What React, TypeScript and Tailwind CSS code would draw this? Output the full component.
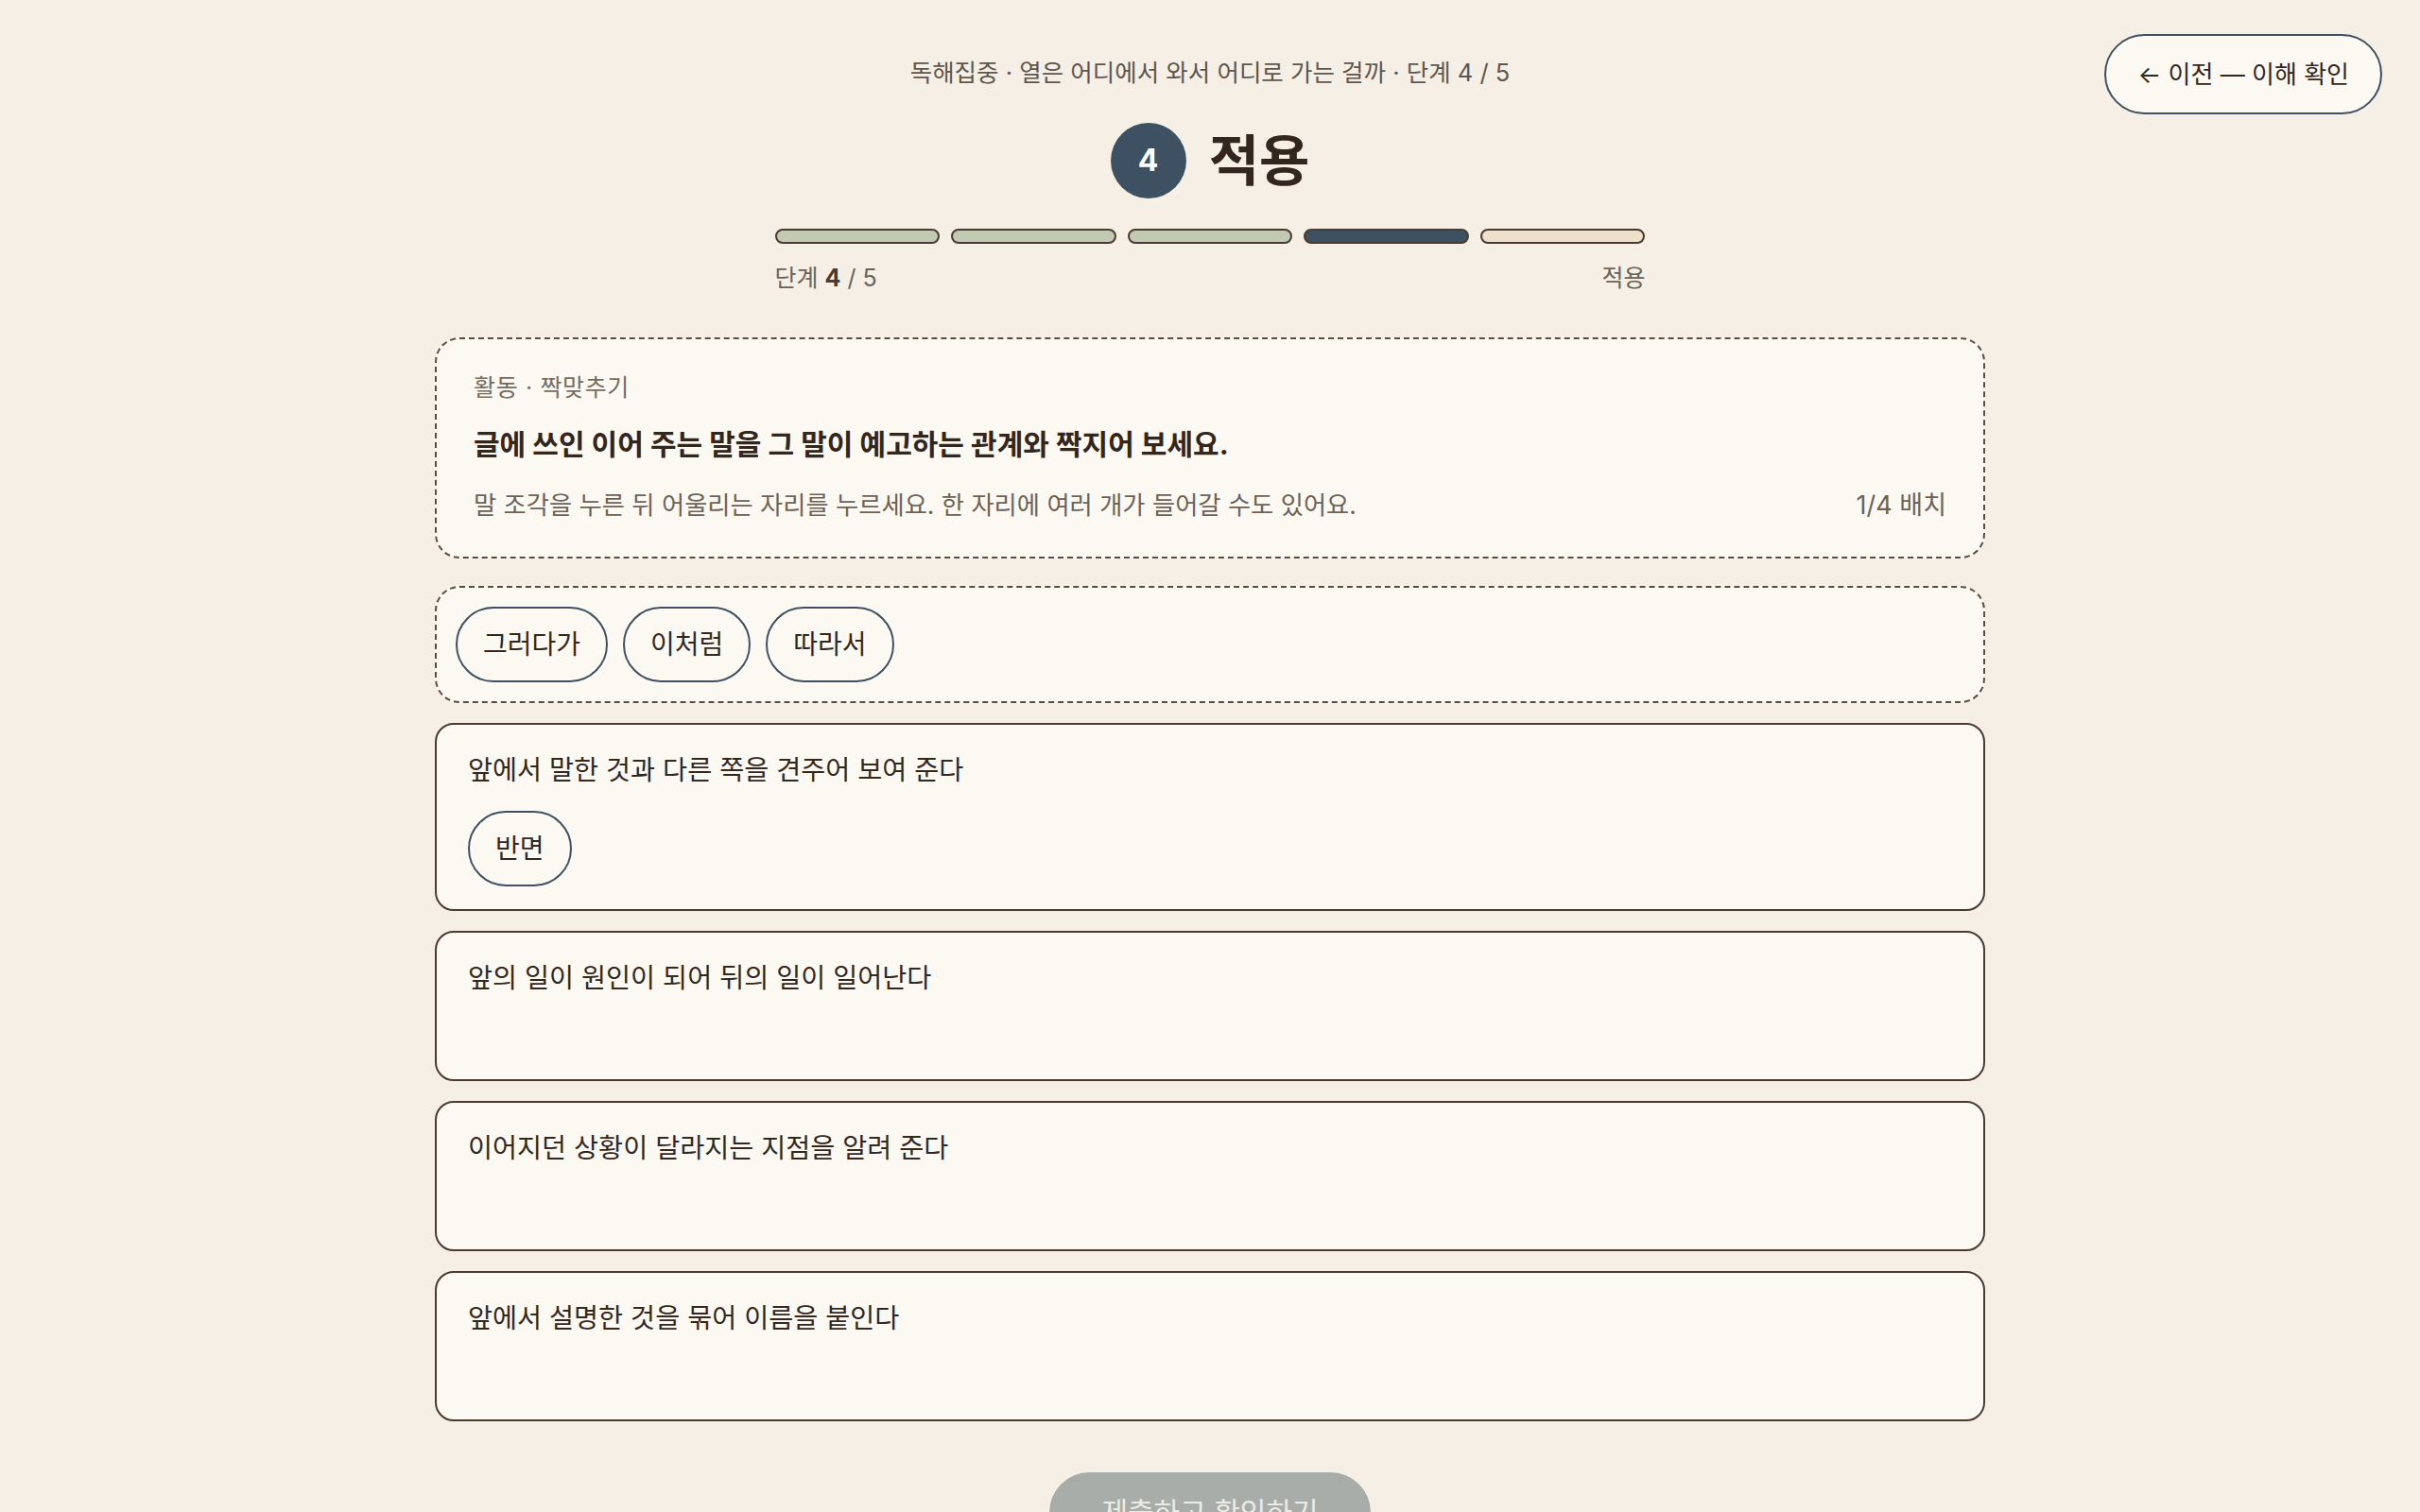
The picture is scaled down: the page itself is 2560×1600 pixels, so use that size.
import React, { useState } from 'react';

const FONT = 'font-[Inter,"Noto_Sans_CJK_KR",sans-serif]';

const steps = ['done', 'done', 'done', 'current', 'todo'] as const;

const slots = [
  { label: '앞에서 말한 것과 다른 쪽을 견주어 보여 준다', placed: ['반면'] },
  { label: '앞의 일이 원인이 되어 뒤의 일이 일어난다', placed: [] as string[] },
  { label: '이어지던 상황이 달라지는 지점을 알려 준다', placed: [] as string[] },
  { label: '앞에서 설명한 것을 묶어 이름을 붙인다', placed: [] as string[] },
];

const Chip = ({ text }: { text: string }) => (
  <button className="h-[80px] px-[27px] rounded-full border-2 border-[#3e5062] bg-[#fcf9f2] text-[28px] leading-[38px] text-[#33281f]">
    {text}
  </button>
);

const App = () => {
  const [pool] = useState(['그러다가', '이처럼', '따라서']);

  return (
    <div className={`min-h-screen bg-[#f5efe5] ${FONT} text-[#33281f]`}>
      <div className="grid grid-cols-[1fr_auto_1fr] pt-[36px]">
        <div />
        <div className="flex flex-col items-center pt-[26px]">
          <p className="text-[25.5px] leading-[30px] text-[#5f564d]">
            독해집중 · 열은 어디에서 와서 어디로 가는 걸까 · 단계 4 / 5
          </p>
          <div className="mt-[38px] flex items-center gap-[24px]">
            <div className="w-[80px] h-[80px] rounded-full bg-[#3e5163] flex items-center justify-center text-white text-[32px] font-bold">
              4
            </div>
            <h1 className="text-[58px] leading-[70px] font-bold text-[#33261c]">적용</h1>
          </div>
          <div className="mt-[32px] w-[921px] flex gap-[12px]">
            {steps.map((s, i) => (
              <div
                key={i}
                className={
                  s === 'done'
                    ? 'flex-1 h-[16px] rounded-full border-2 border-[#4b3a2f] bg-[#c3cab4]'
                    : s === 'current'
                    ? 'flex-1 h-[16px] rounded-full border-2 border-[#4b3a2f] bg-[#3e5163]'
                    : 'flex-1 h-[16px] rounded-full border-2 border-[#4b3a2f] bg-[#eee1cb]'
                }
              />
            ))}
          </div>
          <div className="mt-[21px] w-[921px] flex justify-between text-[25px] leading-[30px] text-[#6b6258]">
            <span>
              단계 <b className="text-[#4b3a2f]">4</b> / 5
            </span>
            <span>적용</span>
          </div>
        </div>
        <div className="flex justify-end items-start pr-[40px]">
          <button className="h-[85px] px-[33px] rounded-full border-2 border-[#3e5062] bg-[#fcf9f2] text-[26px] text-[#33281f]">
            ← 이전 — 이해 확인
          </button>
        </div>
      </div>

      <main className="w-[1640px] mx-auto mt-[48px] flex flex-col pb-10">
        <section className="rounded-[26px] border-2 border-dashed border-[#5a4c41] bg-[#fcf9f2] px-[39px] pt-[35px] pb-[36px]">
          <p className="text-[25px] leading-[32px] tracking-wide text-[#766c62]">활동 · 짝맞추기</p>
          <h2 className="mt-[24px] text-[30px] leading-[40px] font-bold text-[#33261c]">
            글에 쓰인 이어 주는 말을 그 말이 예고하는 관계와 짝지어 보세요.
          </h2>
          <div className="mt-[27px] flex justify-between items-center leading-[36px] text-[#6b6258]">
            <span className="text-[26.3px]">
              말 조각을 누른 뒤 어울리는 자리를 누르세요. 한 자리에 여러 개가 들어갈 수도 있어요.
            </span>
            <span className="text-[27px]">1/4 배치</span>
          </div>
        </section>

        <section className="mt-[29px] rounded-[26px] border-2 border-dashed border-[#5a4c41] bg-[#fcf9f2] p-[20px] flex gap-[16px]">
          {pool.map((w) => (
            <Chip key={w} text={w} />
          ))}
        </section>

        <div className="mt-[21px] flex flex-col gap-[21px]">
          {slots.map((s) => (
            <div
              key={s.label}
              className="rounded-[20px] border-2 border-[#4b3a2f] bg-[#fcf9f2] px-[33px] pt-[28px] pb-[24px]"
            >
              <p className="text-[28.3px] leading-[40px] text-[#33281f]">{s.label}</p>
              <div className="mt-[23px] min-h-[40px] flex gap-[16px]">
                {s.placed.map((w) => (
                  <Chip key={w} text={w} />
                ))}
              </div>
            </div>
          ))}
        </div>

        <div className="mt-[54px] flex justify-center">
          <button className="h-[85px] px-[55px] rounded-full bg-[#a9adaa] text-[30px] text-[#ecebe6]">
            제출하고 확인하기
          </button>
        </div>
      </main>
    </div>
  );
};

export default App;
